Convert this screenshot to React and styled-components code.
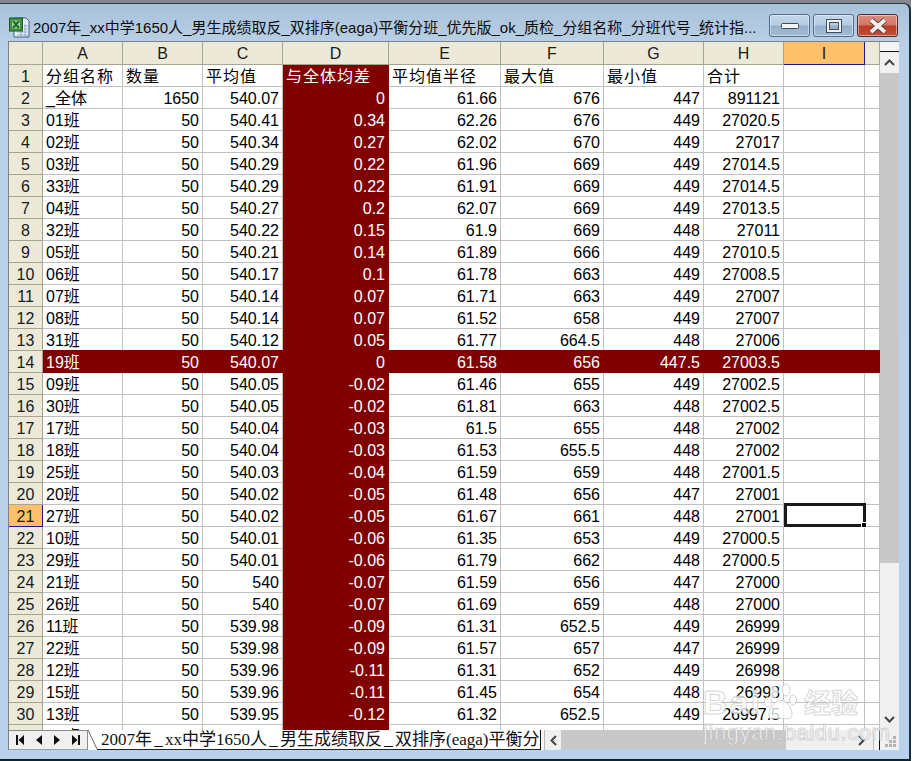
import React from "react";
import styled, { createGlobalStyle } from "styled-components";

const Global = createGlobalStyle`
  html, body { margin: 0; padding: 0; background: #fff; }
  body { font-family: "Liberation Sans", "Noto Sans CJK SC", sans-serif; font-size: 16px; color: #000; }
`;

const COLS = "34px 80px 80px 80px 106px 112px 103px 100px 80px 81px 15px";

const Desktop = styled.div`
  width: 911px;
  height: 761px;
  padding-top: 3px;
  box-sizing: border-box;
  background: #85878f;
  overflow: hidden;
`;
const Win = styled.div`
  position: relative;
  height: 758px;
  box-sizing: border-box;
  border-top: 1px solid #2a3a48;
  border-right: 2px solid #17303f;
  border-bottom: 2px solid #0d2430;
  border-top-right-radius: 7px;
  background: linear-gradient(180deg, #a8c2da 0, #b9d0e6 40px, #b9d2ec 100%);
  display: flex;
  flex-direction: column;
  padding: 0 10px 9px 8px;
`;
const TitleBar = styled.div`
  height: 37px;
  display: flex;
  align-items: flex-start;
  flex: none;
`;
const TitleIcon = styled.svg`
  width: 21px;
  height: 21px;
  margin: 13px 3px 0 1px;
  flex: none;
`;
const TitleText = styled.div`
  width: 725px;
  margin-top: 13px;
  font-size: 15px;
  line-height: 22px;
  white-space: nowrap;
  overflow: hidden;
  color: #0c0c0c;
`;
const WinButtons = styled.div`
  margin: 10px 0 0 11px;
  display: flex;
  gap: 3px;
`;
const WinBtn = styled.div`
  width: 41px;
  height: 23px;
  box-sizing: border-box;
  border-radius: 3px;
  border: 1px solid ${p => (p.$close ? "#5a2a2a" : "#4d6d8a")};
  box-shadow: inset 0 0 0 1px rgba(255, 255, 255, 0.45);
  background: ${p =>
    p.$close
      ? "linear-gradient(180deg,#dc8e80 0,#d47565 48%,#b83c22 52%,#c04f36 100%)"
      : "linear-gradient(180deg,#c3d6ea 0,#b5cbe2 48%,#94afca 52%,#a4bdd6 100%)"};
  display: flex;
  align-items: center;
  justify-content: center;
`;
const Sheet = styled.div`
  width: 891px;
  flex: 1;
  min-height: 0;
  box-sizing: border-box;
  background: #f0f0f0;
  border-top: 1px solid #808080;
  border-left: 1px solid #808080;
  display: flex;
  flex-direction: column;
`;
const Main = styled.div`
  height: 688px;
  flex: none;
  display: flex;
`;
const GridClip = styled.div`
  width: 871px;
  height: 688px;
  overflow: hidden;
  background: #fff;
  flex: none;
`;
const Row = styled.div`
  display: grid;
  grid-template-columns: ${COLS};
  height: ${p => (p.$head ? "23px" : "22px")};
  box-sizing: border-box;
`;
const Head = styled.div`
  box-sizing: border-box;
  background: ${p => (p.$on ? "#ffc06c" : "#ece9d8")};
  border-right: 1px solid ${p => (p.$on ? "#1a1a8c" : "#a5a592")};
  border-bottom: 1px solid ${p => (p.$on ? "#1a1a8c" : "#a5a592")};
  text-align: center;
  line-height: 24px;
  font-size: 16px;
  color: #1a1a1a;
  white-space: nowrap;
  overflow: hidden;
`;
const Cell = styled.div`
  position: relative;
  box-sizing: border-box;
  background: ${p => (p.$hot ? "#800000" : "#fff")};
  color: ${p => (p.$hot ? "#fff" : "#000")};
  border-right: 1px solid ${p => (p.$hot ? "#800000" : "#c0c0c0")};
  border-bottom: 1px solid ${p => (p.$hot ? "#800000" : "#c0c0c0")};
  box-shadow: ${p => (p.$band ? "0 -1px 0 #800000" : "none")};
  text-align: ${p => (p.$num ? "right" : "left")};
  padding: ${p => (p.$num ? "0 3px 0 0" : "0 0 0 3px")};
  height: 22px;
  line-height: 24px;
  font-size: 16px;
  letter-spacing: ${p => (p.$cjk ? "1px" : "0")};
  white-space: nowrap;
`;
const SelBox = styled.div`
  position: absolute;
  left: 0;
  top: -2px;
  right: -2px;
  bottom: -1px;
  border: 3px solid #1a1a1a;
  z-index: 2;
`;
const SelHandle = styled.div`
  position: absolute;
  right: -4px;
  bottom: -4px;
  width: 6px;
  height: 6px;
  background: #000;
  border: 1px solid #fff;
  box-sizing: border-box;
`;
const VScroll = styled.div`
  width: 19px;
  flex: none;
  display: flex;
  flex-direction: column;
  background: #f0f0f0;
`;
const SplitBox = styled.div`
  height: 9px;
  flex: none;
  background: #f4f4f4;
  border-bottom: 1px solid #111;
  box-sizing: content-box;
`;
const ArrowBtn = styled.div`
  flex: none;
  display: flex;
  align-items: center;
  justify-content: center;
  width: ${p => p.$w || "19px"};
  height: ${p => p.$h || "21px"};
`;
const VThumb = styled.div`
  height: 490px;
  flex: none;
  background: #c8c8c8;
`;
const VTrack = styled.div`
  flex: 1;
`;
const BottomBar = styled.div`
  height: 20px;
  flex: none;
  display: flex;
  background: #fff;
`;
const TabNav = styled.div`
  width: 79px;
  height: 20px;
  box-sizing: border-box;
  background: #f0f0f0;
  border-top: 1px solid #8a8a8a;
  border-right: 1px solid #8a8a8a;
  border-bottom: 1px solid #a0a0a0;
  flex: none;
  display: flex;
  align-items: center;
  justify-content: space-around;
  padding: 0 2px;
`;
const TabSlant = styled.svg`
  width: 10px;
  height: 20px;
  flex: none;
`;
const SheetTab = styled.div`
  width: 442px;
  height: 20px;
  flex: none;
  box-sizing: border-box;
  padding-left: 3px;
  border-bottom: 1px solid #222;
  overflow: hidden;
  white-space: nowrap;
  font-family: "Liberation Serif", "Noto Sans CJK SC", serif;
  font-size: 17px;
  line-height: 19px;
  color: #111;
`;
const TabUs = styled.span`
  display: inline-block;
  width: 13px;
  text-align: center;
`;
const TabSplit = styled.div`
  width: 5px;
  flex: none;
  height: 20px;
  box-sizing: border-box;
  background: #f4f4f4;
  border-left: 1px solid #111;
  border-right: 1px solid #bbb;
`;
const HScroll = styled.div`
  width: 335px;
  flex: none;
  display: flex;
  align-items: stretch;
  background: #f0f0f0;
`;
const HThumb = styled.div`
  width: 225px;
  flex: none;
  background: #c8c8c8;
`;
const HTrack = styled.div`
  flex: 1;
`;
const HEnd = styled.div`
  width: 5px;
  flex: none;
  background: #f6f6f6;
  border-left: 1px solid #bbb;
  border-right: 1px solid #111;
`;
const Grip = styled.div`
  width: 19px;
  flex: none;
  background: #f0f0f0;
  display: flex;
  align-items: flex-end;
  justify-content: flex-end;
  padding: 0 2px 2px 0;
  box-sizing: border-box;
`;
const Watermark = styled.div`
  position: absolute;
  left: 703px;
  top: 678px;
  width: 170px;
  height: 64px;
  color: rgba(255, 255, 255, 0.78);
  -webkit-text-stroke: 1px rgba(175, 175, 175, 0.5);
  pointer-events: none;
  z-index: 3;
`;
const MarkTop = styled.div`
  display: flex;
  align-items: center;
  height: 40px;
  white-space: nowrap;
`;
const MarkBai = styled.span`
  font: bold 34px/40px "Liberation Sans", sans-serif;
  letter-spacing: 2px;
`;
const MarkPaw = styled.svg`
  width: 38px;
  height: 38px;
  margin-left: 0;
  flex: none;
`;
const MarkJy = styled.span`
  font: bold 27px/40px "Noto Sans CJK SC", sans-serif;
  margin-left: 4px;
`;
const MarkUrl = styled.div`
  font: 22px/22px "Liberation Sans", sans-serif;
  letter-spacing: 0.6px;
  white-space: nowrap;
`;

const columns = ["A", "B", "C", "D", "E", "F", "G", "H", "I", ""];
const top = ["分组名称", "数量", "平均值", "与全体均差", "平均值半径", "最大值", "最小值", "合计"];
const data = [
  ["_全体", "1650", "540.07", "0", "61.66", "676", "447", "891121"],
  ["01班", "50", "540.41", "0.34", "62.26", "676", "449", "27020.5"],
  ["02班", "50", "540.34", "0.27", "62.02", "670", "449", "27017"],
  ["03班", "50", "540.29", "0.22", "61.96", "669", "449", "27014.5"],
  ["33班", "50", "540.29", "0.22", "61.91", "669", "449", "27014.5"],
  ["04班", "50", "540.27", "0.2", "62.07", "669", "449", "27013.5"],
  ["32班", "50", "540.22", "0.15", "61.9", "669", "448", "27011"],
  ["05班", "50", "540.21", "0.14", "61.89", "666", "449", "27010.5"],
  ["06班", "50", "540.17", "0.1", "61.78", "663", "449", "27008.5"],
  ["07班", "50", "540.14", "0.07", "61.71", "663", "449", "27007"],
  ["08班", "50", "540.14", "0.07", "61.52", "658", "449", "27007"],
  ["31班", "50", "540.12", "0.05", "61.77", "664.5", "448", "27006"],
  ["19班", "50", "540.07", "0", "61.58", "656", "447.5", "27003.5"],
  ["09班", "50", "540.05", "-0.02", "61.46", "655", "449", "27002.5"],
  ["30班", "50", "540.05", "-0.02", "61.81", "663", "448", "27002.5"],
  ["17班", "50", "540.04", "-0.03", "61.5", "655", "448", "27002"],
  ["18班", "50", "540.04", "-0.03", "61.53", "655.5", "448", "27002"],
  ["25班", "50", "540.03", "-0.04", "61.59", "659", "448", "27001.5"],
  ["20班", "50", "540.02", "-0.05", "61.48", "656", "447", "27001"],
  ["27班", "50", "540.02", "-0.05", "61.67", "661", "448", "27001"],
  ["10班", "50", "540.01", "-0.06", "61.35", "653", "449", "27000.5"],
  ["29班", "50", "540.01", "-0.06", "61.79", "662", "448", "27000.5"],
  ["21班", "50", "540", "-0.07", "61.59", "656", "447", "27000"],
  ["26班", "50", "540", "-0.07", "61.69", "659", "448", "27000"],
  ["11班", "50", "539.98", "-0.09", "61.31", "652.5", "449", "26999"],
  ["22班", "50", "539.98", "-0.09", "61.57", "657", "447", "26999"],
  ["12班", "50", "539.96", "-0.11", "61.31", "652", "449", "26998"],
  ["15班", "50", "539.96", "-0.11", "61.45", "654", "448", "26998"],
  ["13班", "50", "539.95", "-0.12", "61.32", "652.5", "449", "26997.5"],
  ["14班", "", "", "", "", "", "", ""],
];

const Chevron = ({ d }) => (
  <svg width="11" height="11" viewBox="0 0 11 11">
    <path d={d} fill="none" stroke="#444" strokeWidth="2" />
  </svg>
);
const Nav = ({ d }) => (
  <svg width="10" height="12" viewBox="0 0 10 12">
    <path d={d} fill="#111" />
  </svg>
);

export default function App() {
  return (
    <Desktop>
      <Global />
      <Win>
        <TitleBar>
          <TitleIcon viewBox="0 0 21 21">
            <path d="M5 1h12l3 3v16H5z" fill="#eef3fa" stroke="#3c5a8c" />
            <path d="M15 9h4M15 12h4M8 15h11M8 18h11M12 14v5M16 7v12" stroke="#8fa8d0" strokeWidth="1" />
            <rect x="0.5" y="1" width="13" height="13" fill="#3f8f44" stroke="#1d5c24" />
            <rect x="3" y="3.5" width="8" height="8" fill="#a9d39c" />
            <path d="M4 4l6 7M10 4l-6 7" stroke="#1d6a2a" strokeWidth="2" />
          </TitleIcon>
          <TitleText>2007年_xx中学1650人_男生成绩取反_双排序(eaga)平衡分班_优先版_ok_质检_分组名称_分班代号_统计指...</TitleText>
          <WinButtons>
            <WinBtn>
              <svg width="18" height="8" viewBox="0 0 18 8">
                <rect x="0.5" y="1.5" width="17" height="5" rx="1" fill="#f4f4f4" stroke="#3b4e62" />
              </svg>
            </WinBtn>
            <WinBtn>
              <svg width="16" height="14" viewBox="0 0 16 14">
                <rect x="1.5" y="1.5" width="13" height="11" fill="none" stroke="#f2f2f2" strokeWidth="3" />
                <rect x="0.5" y="0.5" width="15" height="13" fill="none" stroke="#3b4e62" />
                <rect x="3.5" y="3.5" width="9" height="7" fill="none" stroke="#3b4e62" />
              </svg>
            </WinBtn>
            <WinBtn $close>
              <svg width="20" height="16" viewBox="0 0 20 16">
                <path d="M3 2l14 12M17 2L3 14" stroke="#4a2a2a" strokeWidth="5.5" />
                <path d="M3 2l14 12M17 2L3 14" stroke="#f2f0ee" strokeWidth="4" />
              </svg>
            </WinBtn>
          </WinButtons>
        </TitleBar>
        <Sheet>
          <Main>
            <GridClip>
              <Row $head>
                <Head />
                {columns.map((c, i) => (
                  <Head key={i} $on={c === "I"}>{c}</Head>
                ))}
              </Row>
              <Row>
                <Head>1</Head>
                {top.map((t, i) => (
                  <Cell key={i} $hot={i === 3} $cjk>{t}</Cell>
                ))}
                <Cell />
                <Cell />
              </Row>
              {data.map((r, ri) => {
                const n = ri + 2;
                const hotRow = n === 14;
                return (
                  <Row key={n}>
                    <Head $on={n === 21}>{n === 31 ? "" : n}</Head>
                    {r.map((v, ci) => (
                      <Cell key={ci} $band={hotRow} $hot={hotRow || ci === 3} $num={ci > 0}>{v}</Cell>
                    ))}
                    <Cell $band={hotRow} $hot={hotRow}>
                      {n === 21 && (
                        <SelBox>
                          <SelHandle />
                        </SelBox>
                      )}
                    </Cell>
                    <Cell $band={hotRow} $hot={hotRow} />
                  </Row>
                );
              })}
            </GridClip>
            <VScroll>
              <SplitBox />
              <ArrowBtn>
                <Chevron d="M1 8l4.5-4.5L10 8" />
              </ArrowBtn>
              <VThumb />
              <VTrack />
              <ArrowBtn>
                <Chevron d="M1 3l4.5 4.5L10 3" />
              </ArrowBtn>
            </VScroll>
          </Main>
          <BottomBar>
            <TabNav>
              <Nav d="M1 1h2v10H1zM9 1v10L3.5 6z" />
              <Nav d="M8 1v10L2 6z" />
              <Nav d="M2 1v10l6-5z" />
              <Nav d="M1 1v10l5.5-5zM7 1h2v10H7z" />
            </TabNav>
            <TabSlant viewBox="0 0 10 20">
              <path d="M0 0l9 19" stroke="#666" fill="none" />
              <path d="M9 19.5h1" stroke="#222" />
            </TabSlant>
            <SheetTab>
              2007年<TabUs>_</TabUs>xx中学1650人<TabUs>_</TabUs>男生成绩取反<TabUs>_</TabUs>双排序(eaga)平衡分班
            </SheetTab>
            <TabSplit />
            <HScroll>
              <ArrowBtn $w="16px" $h="20px">
                <Chevron d="M8 1L3.5 5.5 8 10" />
              </ArrowBtn>
              <HThumb />
              <HTrack />
              <ArrowBtn $w="24px" $h="20px">
                <Chevron d="M3 1l4.5 4.5L3 10" />
              </ArrowBtn>
              <HEnd />
            </HScroll>
            <Grip>
              <svg width="12" height="12" viewBox="0 0 12 12" fill="#b4b4b4">
                <rect x="8" y="0" width="3" height="3" />
                <rect x="4" y="4" width="3" height="3" />
                <rect x="8" y="4" width="3" height="3" />
                <rect x="0" y="8" width="3" height="3" />
                <rect x="4" y="8" width="3" height="3" />
                <rect x="8" y="8" width="3" height="3" />
              </svg>
            </Grip>
          </BottomBar>
        </Sheet>
        <Watermark>
          <MarkTop>
            <MarkBai>Bai</MarkBai>
            <MarkPaw viewBox="0 0 34 38" fill="rgba(255,255,255,.78)" stroke="rgba(175,175,175,.55)">
              <ellipse cx="10" cy="9" rx="4" ry="6" />
              <ellipse cx="22" cy="7" rx="4" ry="6" />
              <ellipse cx="4" cy="19" rx="3.5" ry="5" />
              <ellipse cx="29" cy="17" rx="3.5" ry="5" />
              <path d="M17 17c6 0 11 9 11 14 0 6-7 5-11 4-5 1-12 2-12-4 0-5 6-14 12-14z" />
            </MarkPaw>
            <MarkJy>经验</MarkJy>
          </MarkTop>
          <MarkUrl>jingyan.baidu.com</MarkUrl>
        </Watermark>
      </Win>
    </Desktop>
  );
}
